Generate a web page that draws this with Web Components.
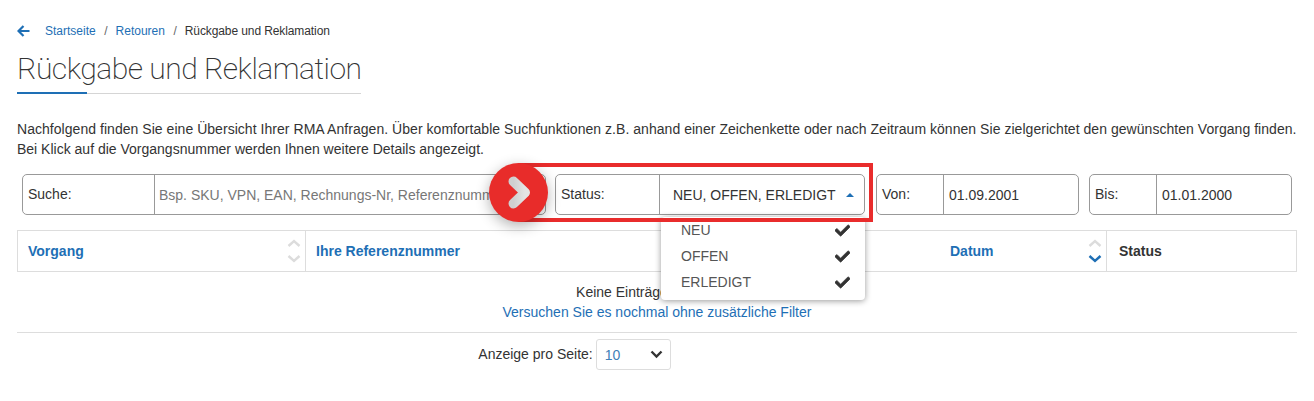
<!DOCTYPE html>
<html lang="de">
<head>
<meta charset="utf-8">
<title>Rückgabe und Reklamation</title>
<style>
  html, body { margin: 0; background: #fff; }
  body { font: 14px/20px "Liberation Sans", Arial, sans-serif; color: #333; overflow: hidden; }
</style>
</head>
<body>
<rma-page>
  <rma-breadcrumb></rma-breadcrumb>
  <rma-title>Rückgabe und Reklamation</rma-title>
  <rma-intro><span style="letter-spacing:.04px">Nachfolgend finden Sie eine Übersicht Ihrer RMA Anfragen. Über komfortable Suchfunktionen z.B. anhand einer Zeichenkette oder nach Zeitraum können Sie zielgerichtet den gewünschten Vorgang finden.</span> Bei Klick auf die Vorgangsnummer werden Ihnen weitere Details angezeigt.</rma-intro>
  <rma-filters></rma-filters>
  <rma-table></rma-table>
  <rma-empty></rma-empty>
  <rma-pager></rma-pager>
</rma-page>

<script>
function shadow(el, html) {
  const root = el.attachShadow({ mode: 'open' });
  const template = document.createElement('template');
  template.innerHTML = html;
  root.appendChild(template.content.cloneNode(true));
  return root;
}

class RmaPage extends HTMLElement {
  constructor() {
    super();
    shadow(this, `
      <style>
        :host { display: block; padding: 0 17px; width: 1280px; }
      </style>
      <slot></slot>
    `);
  }
}

class RmaBreadcrumb extends HTMLElement {
  constructor() {
    super();
    shadow(this, `
      <style>
        :host { display: flex; align-items: center; height: 20px; padding-top: 21px; font-size: 12px; color: #333; }
        svg { width: 13px; height: 12px; margin-right: 15px; margin-top: -1px; }
        a { color: #1e6fb5; text-decoration: none; }
        i { font-style: normal; color: #666; margin: 0 8px 0 8.5px; }
        span { letter-spacing: -.1px; }
      </style>
      <svg viewBox="0 0 13 12"><path d="M12.500 6H2M6.500 1 1.500 6l5 5" fill="none" stroke="#1e6fb5" stroke-width="2.200"/></svg>
      <a href="#">Startseite</a><i>/</i><a href="#">Retouren</a><i>/</i><span>Rückgabe und Reklamation</span>
    `);
  }
}

class RmaTitle extends HTMLElement {
  constructor() {
    super();
    shadow(this, `
      <style>
        :host { display: block; width: 344px; margin-top: 9px; border-bottom: 1px solid #d5d5d5; position: relative; height: 43px; }
        h1 { margin: 0; font: 200 30px/38px Roboto, sans-serif; letter-spacing: -.5px; color: #333; white-space: nowrap; }
        .accent { width: 70px; height: 2px; background: #1e6fb5; position: absolute; left: 0; bottom: -1px; }
      </style>
      <h1><slot></slot></h1>
      <div class="accent"></div>
    `);
  }
}

class RmaIntro extends HTMLElement {
  constructor() {
    super();
    shadow(this, `
      <style>
        :host { display: block; margin-top: 25px; line-height: 20px; width: 1285px; }
      </style>
      <slot></slot>
    `);
  }
}

class RmaGroup extends HTMLElement {
  constructor() {
    super();
    shadow(this, `
      <style>
        :host { display: flex; box-sizing: border-box; height: 41px; border: 1px solid #999; border-radius: 5px; background: #fff; }
        .label { box-sizing: border-box; flex: none; width: var(--label-width, 100px); padding: 0 5px 2px; border-right: 1px solid #999; display: flex; align-items: center; }
        .value { flex: 1; min-width: 0; display: flex; align-items: center; padding-left: var(--value-pad, 5px); white-space: nowrap; overflow: hidden; }
      </style>
      <div class="label"><slot name="label"></slot></div>
      <div class="value"><slot></slot></div>
    `);
  }
}

class RmaStatusSelect extends HTMLElement {
  constructor() {
    super();
    const check = '<svg viewBox="0 0 512 512"><path d="M173.9 439.4 7.5 273a25.6 25.6 0 0 1 0-36.2l36.2-36.2a25.6 25.6 0 0 1 36.2 0L192 312.7 432.1 72.6a25.6 25.6 0 0 1 36.2 0l36.2 36.2a25.6 25.6 0 0 1 0 36.2l-294.4 294.4a25.6 25.6 0 0 1-36.2 0z"/></svg>';
    shadow(this, `
      <style>
        :host { display: block; width: 310px; position: relative; --label-width: 104px; --value-pad: 13px; }
        rma-group { width: 100%; }
        .caret { position: absolute; right: 11px; top: 19px; width: 0; height: 0; border: 4px solid transparent; border-top: 0; border-bottom: 4px solid #1e6fb5; }
        .menu { position: absolute; left: 106px; top: 43px; width: 204px; height: 83px; box-sizing: border-box; background: #fff; border-radius: 4px; box-shadow: 0 1px 6px rgba(0,0,0,.4); color: #555; z-index: 3; }
        .item { display: flex; justify-content: space-between; align-items: center; height: 26px; padding: 0 15px 0 20px; }
        svg { width: 15px; height: 15px; fill: #333; stroke: #333; stroke-width: 24; }
      </style>
      <rma-group><span slot="label">Status:</span>NEU, OFFEN, ERLEDIGT</rma-group>
      <span class="caret"></span>
      <div class="menu">
        <div class="item">NEU${check}</div>
        <div class="item">OFFEN${check}</div>
        <div class="item">ERLEDIGT${check}</div>
      </div>
    `);
  }
}

class RmaCallout extends HTMLElement {
  constructor() {
    super();
    shadow(this, `
      <style>
        :host { display: block; position: absolute; top: 0; width: 384px; height: 59px; z-index: 4; pointer-events: none; }
        .box { position: absolute; left: 30px; top: 0; right: 0; bottom: 0; border: 4px solid #e92c2c; box-sizing: border-box; }
        .dot { position: absolute; left: 0; top: 0; width: 59px; height: 59px; border-radius: 50%; background: #e82c2a; box-shadow: 0 4px 14px rgba(0,0,0,.3); }
        svg { position: absolute; left: 19px; top: 13px; width: 25px; height: 33px; }
      </style>
      <div class="box"></div>
      <div class="dot"><svg viewBox="0 0 25 33">
        <defs><linearGradient id="chev" x1="0" y1="0" x2="1" y2="0"><stop offset="0" stop-color="#cfcfcf"/><stop offset="1" stop-color="#e4e4e4"/></linearGradient></defs>
        <path d="M5.500 5.500 17 16.500 5.500 27.500" fill="none" stroke="url(#chev)" stroke-width="10" stroke-linecap="round" stroke-linejoin="round"/>
      </svg></div>
    `);
  }
}

class RmaFilters extends HTMLElement {
  constructor() {
    super();
    shadow(this, `
      <style>
        :host { display: flex; position: relative; margin-top: 4px; padding: 11px 0 0 5px; height: 49px; }
        rma-callout { left: 472px; }
        .search { width: 524px; margin-right: 9px; --label-width: 132px; --value-pad: 4px; }
        .date { width: 203px; }
        .von { margin-left: 11px; --label-width: 67px; }
        .bis { margin-left: 10px; --label-width: 67px; }
        .placeholder { color: #777; }
      </style>
      <rma-group class="search"><span slot="label">Suche:</span><span class="placeholder">Bsp. SKU, VPN, EAN, Rechnungs-Nr, Referenznummer</span></rma-group>
      <rma-status-select></rma-status-select>
      <rma-group class="date von"><span slot="label">Von:</span>01.09.2001</rma-group>
      <rma-group class="date bis"><span slot="label">Bis:</span>01.01.2000</rma-group>
      <rma-callout></rma-callout>
    `);
  }
}

class RmaSort extends HTMLElement {
  constructor() {
    super();
    const down = this.getAttribute('dir') === 'desc' ? '#1e6fb5' : '#dcdcdc';
    shadow(this, `
      <style>
        :host { display: block; width: 14px; height: 26px; }
        svg { display: block; }
      </style>
      <svg width="14" height="26" viewBox="0 0 14 26" fill="none" stroke-width="2.400">
        <path d="M1.500 8 7 3l5.500 5" stroke="#dcdcdc"/>
        <path d="M1.500 18l5.500 5 5.500-5" stroke="${down}"/>
      </svg>
    `);
  }
}

class RmaTable extends HTMLElement {
  constructor() {
    super();
    shadow(this, `
      <style>
        :host { display: grid; grid-template-columns: 288px 335px 466px 1fr; box-sizing: border-box; width: 1280px; height: 42px; margin-top: 7px; border: 1px solid #ddd; font-weight: bold; }
        .th { display: flex; align-items: center; justify-content: space-between; padding: 0 4px 0 10px; color: #1e6fb5; border-right: 1px solid #ddd; }
        .th:last-child { border-right: 0; color: #333; padding-left: 12px; }
        .spacer { border-right: 0; }
        .date { padding-left: 309px; }
      </style>
      <div class="th">Vorgang<rma-sort></rma-sort></div>
      <div class="th spacer">Ihre Referenznummer</div>
      <div class="th date">Datum<rma-sort dir="desc"></rma-sort></div>
      <div class="th">Status</div>
    `);
  }
}

class RmaEmpty extends HTMLElement {
  constructor() {
    super();
    shadow(this, `
      <style>
        :host { display: block; box-sizing: border-box; height: 61px; padding-top: 10px; text-align: center; border-bottom: 1px solid #ddd; }
        a { color: #1e6fb5; text-decoration: none; }
      </style>
      <div>Keine Einträge vorhanden</div>
      <a href="#">Versuchen Sie es nochmal ohne zusätzliche Filter</a>
    `);
  }
}

class RmaPager extends HTMLElement {
  constructor() {
    super();
    shadow(this, `
      <style>
        :host { display: flex; justify-content: center; align-items: center; gap: 4px; margin-top: 6px; padding-right: 166px; }
        .select { box-sizing: border-box; width: 75px; height: 31px; border: 1px solid #ddd; border-radius: 3px; display: flex; align-items: center; justify-content: space-between; padding: 0 7px 0 8px; color: #3f7fb8; }
        svg { width: 13px; height: 9px; }
        span { padding: 0 0 2px 1px; margin-right: -1px; }
      </style>
      <span>Anzeige pro Seite:</span>
      <div class="select">10<svg viewBox="0 0 13 9"><path d="M1.500 1.500 6.500 6.500l5-5" fill="none" stroke="#333" stroke-width="2.400"/></svg></div>
    `);
  }
}

customElements.define('rma-page', RmaPage);
customElements.define('rma-breadcrumb', RmaBreadcrumb);
customElements.define('rma-title', RmaTitle);
customElements.define('rma-intro', RmaIntro);
customElements.define('rma-group', RmaGroup);
customElements.define('rma-status-select', RmaStatusSelect);
customElements.define('rma-callout', RmaCallout);
customElements.define('rma-filters', RmaFilters);
customElements.define('rma-sort', RmaSort);
customElements.define('rma-table', RmaTable);
customElements.define('rma-empty', RmaEmpty);
customElements.define('rma-pager', RmaPager);
</script>
</body>
</html>
